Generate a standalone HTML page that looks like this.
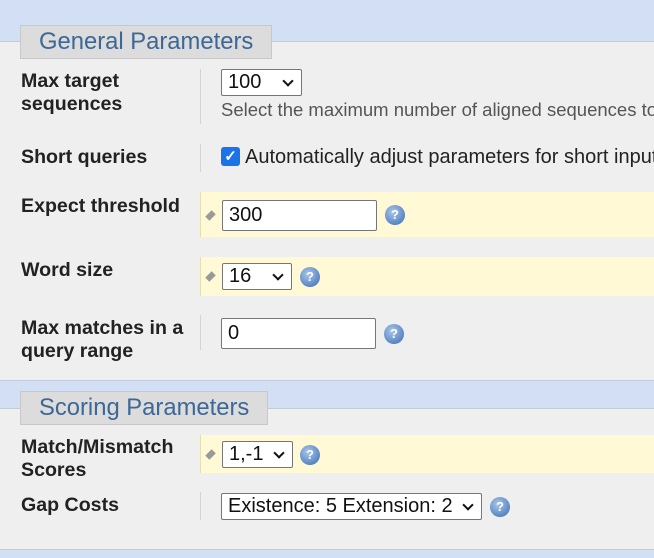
<!DOCTYPE html>
<html style="overflow:hidden"><head><style>
body{margin:0;width:654px;height:558px;background:#efefef;font-family:"Liberation Sans",Arial,sans-serif;position:relative;overflow:hidden}
.a{position:absolute}
.band{left:0;width:654px;background:#d3dff5;border-bottom:1px solid #c3cbd8}
.tab{background:#dcdcdc;border:1px solid #c8c8c8;color:#3c6796;font-size:23.8px;padding-left:18px;box-sizing:border-box;line-height:32px}
.lbl{left:21px;font-weight:bold;font-size:19.6px;color:#222;line-height:23px;margin-top:2px}
.vl{left:200px;width:1px;background:#d4d4d4}
.y{left:200px;width:454px;background:#fff9d6;border-left:1px solid #e4dfb0}
.sel,.inp{background:#fff;border:1px solid #767676;border-radius:2px;font-size:20px;color:#111;box-sizing:border-box;line-height:24px;padding-left:6px}
.sel:after{content:"";position:absolute;right:9px;top:7px;width:6px;height:6px;border-right:2px solid #111;border-bottom:2px solid #111;transform:rotate(45deg)}
.dia{width:9px;height:9px;background:#999;transform:rotate(45deg) scaleX(0.65)}
.q{width:20px;height:20px;border-radius:50%;background:radial-gradient(circle at 40% 35%,#a9c6ea,#5a86c4 70%,#3f6aa9);color:#fff;font-size:13px;font-weight:bold;text-align:center;line-height:20px}
.txt{font-size:18.5px;color:#555}
.clip{overflow:hidden;white-space:nowrap}
</style></head><body>
<div class="a band" style="top:0;height:41px"></div>
<div class="a tab" style="left:20px;top:25px;width:252px;height:34px">General Parameters</div>

<div class="a lbl" style="top:68px">Max target<br>sequences</div>
<div class="a vl" style="top:69px;height:55px"></div>
<div class="a sel" style="left:221px;top:69px;width:81px;height:27px">100</div>
<div class="a txt clip" style="left:221px;top:99px;width:433px">Select the maximum number of aligned sequences to display</div>

<div class="a lbl" style="top:144px">Short queries</div>
<div class="a vl" style="top:144px;height:28px"></div>
<div class="a" style="left:221px;top:147px;width:19px;height:19px;background:#1a73e8;border-radius:3px;color:#fff;font-size:15px;line-height:19px;text-align:center;font-weight:bold">✓</div>
<div class="a clip" style="left:245px;top:146px;width:409px;font-size:20px;color:#222">Automatically adjust parameters for short input sequences</div>

<div class="a y" style="top:192px;height:45px"></div>
<div class="a lbl" style="top:193px">Expect threshold</div>
<div class="a dia" style="left:206px;top:211px"></div>
<div class="a inp" style="left:222px;top:200px;width:155px;height:31px;line-height:29px">300</div>
<div class="a q" style="left:385px;top:205px">?</div>

<div class="a y" style="top:257px;height:39px"></div>
<div class="a lbl" style="top:257px">Word size</div>
<div class="a dia" style="left:206px;top:272px"></div>
<div class="a sel" style="left:222px;top:263px;width:70px;height:27px">16</div>
<div class="a q" style="left:300px;top:267px">?</div>

<div class="a lbl" style="top:315px">Max matches in a<br>query range</div>
<div class="a vl" style="top:315px;height:35px"></div>
<div class="a inp" style="left:221px;top:318px;width:155px;height:31px;line-height:29px">0</div>
<div class="a q" style="left:384px;top:324px">?</div>

<div class="a band" style="top:380px;height:27px;border-top:1px solid #c3cbd8"></div>
<div class="a tab" style="left:20px;top:391px;width:248px;height:34px">Scoring Parameters</div>

<div class="a y" style="top:435px;height:38px"></div>
<div class="a lbl" style="top:434px">Match/Mismatch<br>Scores</div>
<div class="a dia" style="left:206px;top:450px"></div>
<div class="a sel" style="left:222px;top:441px;width:71px;height:27px">1,-1</div>
<div class="a q" style="left:300px;top:445px">?</div>

<div class="a lbl" style="top:492px">Gap Costs</div>
<div class="a vl" style="top:492px;height:28px"></div>
<div class="a sel" style="left:221px;top:493px;width:261px;height:27px">Existence: 5 Extension: 2</div>
<div class="a q" style="left:490px;top:497px">?</div>

<div class="a band" style="top:549px;height:9px;border-top:1px solid #c3cbd8"></div>
</body></html>
